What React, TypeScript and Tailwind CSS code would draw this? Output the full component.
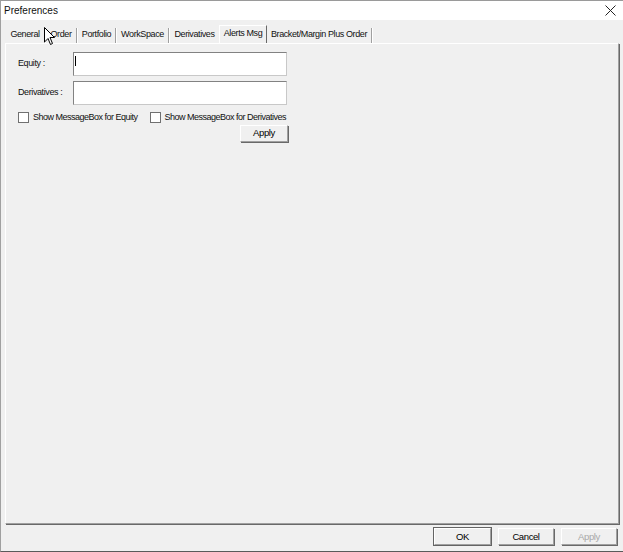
import React, { useState } from 'react';

const tabs = [
    { label: 'General', w: 'w-[38px]' },
    { label: 'Order', w: 'w-[30px]' },
    { label: 'Portfolio', w: 'w-[37px]' },
    { label: 'WorkSpace', w: 'w-[51px]' },
    { label: 'Derivatives', w: 'w-[49px]' },
    { label: 'Alerts Msg', w: 'w-[48px]' },
    { label: 'Bracket/Margin Plus Order', w: 'w-[104px]' },
];

const Separator = () => (
    <div className="w-[2px] h-[15px] border-l border-l-[#a0a0a0] border-r border-r-white" />
);

const WinButton = ({ label, disabled, isDefault, className }: { label: string; disabled?: boolean; isDefault?: boolean; className?: string }) => (
    <button
        disabled={disabled}
        className={`h-[17px] bg-[#f0f0f0] border-t border-l border-t-white border-l-white border-r border-b border-r-[#a0a0a0] border-b-[#a0a0a0] shadow-[1px_1px_0_#696969] text-[9.5px] leading-none flex items-center justify-center ${disabled ? 'text-[#a8a8a8]' : 'text-black'} ${isDefault ? 'outline outline-1 outline-[#646464]' : ''} ${className ?? ''}`}
    >
        {label}
    </button>
);

const CheckBox = ({ label }: { label: string }) => {
    const [checked, setChecked] = useState(false);
    return (
        <label className="flex items-center gap-[4px] cursor-default whitespace-nowrap" onClick={() => setChecked(!checked)}>
            <span className="w-[11px] h-[11px] bg-white border border-[#707070] flex items-center justify-center text-[9px] leading-none">
                {checked ? '✓' : ''}
            </span>
            <span className="tracking-[-0.5px]">{label}</span>
        </label>
    );
};

export default function App() {
    const [active, setActive] = useState(5);

    return (
        <div
            className="relative w-[623px] h-[552px] bg-[#f0f0f0] border-t border-t-[#9a9a9a] border-l border-l-[#a0a0a0] border-b border-b-[#5a5a5a] flex flex-col text-[#111] text-[9px] tracking-[-0.4px]"
            style={{ fontFamily: '"Liberation Sans", Arial, sans-serif' }}
        >
            {/* title bar */}
            <div className="h-[19px] bg-white flex items-center justify-between pl-[3px] pr-[6px]">
                <span className="text-[10px] tracking-normal">Preferences</span>
                <svg width="11" height="11" viewBox="0 0 11 11" className="mr-[1px]">
                    <path d="M0.5 0.5 L10.5 10.5 M10.5 0.5 L0.5 10.5" stroke="#222" strokeWidth="1" />
                </svg>
            </div>

            {/* tab strip */}
            <div className="flex items-end pl-[5px] pt-[5px] h-[23px]">
                {tabs.map((t, i) => {
                    const selected = i === active;
                    const nextSelected = i + 1 === active;
                    return (
                        <React.Fragment key={t.label}>
                            <div
                                onClick={() => setActive(i)}
                                className={`${t.w} flex items-center justify-center whitespace-nowrap ${
                                    selected
                                        ? 'h-[18px] border-t border-l border-t-white border-l-white border-r border-r-[#696969] pb-[2px]'
                                        : 'h-[17px]'
                                }`}
                            >
                                {t.label}
                            </div>
                            {!selected && !nextSelected && <Separator />}
                        </React.Fragment>
                    );
                })}
            </div>

            {/* tab panel */}
            <div className="mx-[4px] h-[481px] border-t border-l border-t-white border-l-white border-r border-b border-r-[#a0a0a0] border-b-[#a0a0a0] shadow-[1px_1px_0_#696969] pt-[8px] pl-[12px]">
                <div className="grid grid-cols-[55px_214px] gap-y-[5px] items-center">
                    <span className="whitespace-nowrap">Equity :</span>
                    <div className="relative h-[24px] bg-white border border-[#828282] border-r-[#c8c8c8] border-b-[#c8c8c8]">
                        <div className="absolute left-[1px] top-[3px] w-px h-[10px] bg-black" />
                    </div>
                    <span className="whitespace-nowrap">Derivatives :</span>
                    <div className="h-[24px] bg-white border border-[#828282] border-r-[#c8c8c8] border-b-[#c8c8c8]" />
                </div>
                <div className="flex items-center gap-[12px] mt-[6px]">
                    <CheckBox label="Show MessageBox for Equity" />
                    <CheckBox label="Show MessageBox for Derivatives" />
                </div>
                <div className="w-[270px] flex justify-end">
                    <WinButton label="Apply" className="w-[48px]" />
                </div>
            </div>

            {/* bottom buttons */}
            <div className="flex justify-end gap-[7px] pr-[6px] mt-[4px]">
                <WinButton label="OK" isDefault className="w-[57px]" />
                <WinButton label="Cancel" className="w-[56px]" />
                <WinButton label="Apply" disabled className="w-[56px]" />
            </div>

            {/* mouse pointer */}
            <svg width="12" height="19" viewBox="0 0 12 19" className="absolute left-[43px] top-[26px] pointer-events-none">
                <path d="M0.5 0.5 L0.5 15 L4 11.5 L6.5 17.5 L8.5 16.5 L6 10.5 L10.5 10.5 Z" fill="#fff" stroke="#000" strokeWidth="1" strokeLinejoin="round" />
            </svg>
        </div>
    );
}
